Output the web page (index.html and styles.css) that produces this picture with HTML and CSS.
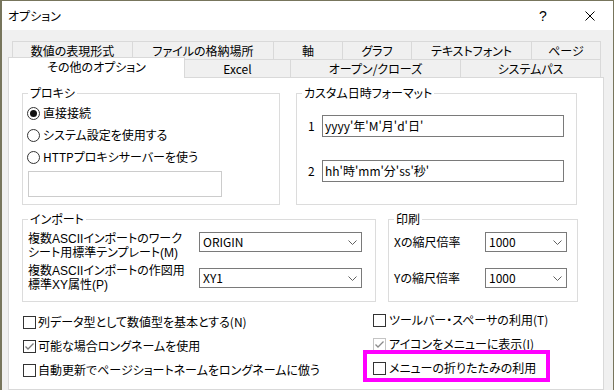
FILE: index.html
```html
<!DOCTYPE html>
<html lang="ja">
<head>
<meta charset="utf-8">
<link rel="stylesheet" href="styles.css">
</head>
<body>
<div class="dialog">
  <div class="titlebar">
    <span class="title">オプション</span>
    <span class="tb-btn help">?</span>
    <span class="tb-btn close"><svg width="10" height="10" viewBox="0 0 10 10"><path d="M0.5 0.5L9.5 9.5M9.5 0.5L0.5 9.5" stroke="#000" stroke-width="1" fill="none"/></svg></span>
  </div>
  <div class="content">
    <div class="tabrow back">
      <div class="tab">数値の表現形式</div>
      <div class="tab">ファイルの格納場所</div>
      <div class="tab">軸</div>
      <div class="tab">グラフ</div>
      <div class="tab">テキストフォント</div>
      <div class="tab">ページ</div>
    </div>
    <div class="tabrow front">
      <div class="tab sel">その他のオプション</div>
      <div class="tab nol">Excel</div>
      <div class="tab">オープン/クローズ</div>
      <div class="tab">システムパス</div>
    </div>
    <div class="panel">
      <div class="grouprow top">
        <fieldset class="proxy">
          <legend>プロキシ</legend>
          <div class="proxy-body">
            <div class="radio-row"><span class="radio on"></span>直接接続</div>
            <div class="radio-row"><span class="radio"></span>システム設定を使用する</div>
            <div class="radio-row"><span class="radio"></span>HTTPプロキシサーバーを使う</div>
            <div class="proxy-input"></div>
          </div>
        </fieldset>
        <fieldset class="datefmt">
          <legend>カスタム日時フォーマット</legend>
          <div class="date-body">
            <div class="date-row"><span class="date-label">1</span><div class="textbox">yyyy'年'M'月'd'日'</div></div>
            <div class="date-row"><span class="date-label">2</span><div class="textbox">hh'時'mm'分'ss'秒'</div></div>
          </div>
        </fieldset>
      </div>
      <div class="grouprow mid">
        <fieldset class="import">
          <legend>インポート</legend>
          <div class="import-body">
            <div class="imp-row r1">
              <div class="imp-label">複数ASCIIインポートのワーク<br>シート用標準テンプレート(M)</div>
              <div class="combo wide"><span>ORIGIN</span><svg width="9" height="5" viewBox="0 0 9 5"><path d="M0.5 0.5L4.5 4.5L8.5 0.5" stroke="#606060" fill="none"/></svg></div>
            </div>
            <div class="imp-row r2">
              <div class="imp-label">複数ASCIIインポートの作図用<br>標準XY属性(P)</div>
              <div class="combo wide"><span>XY1</span><svg width="9" height="5" viewBox="0 0 9 5"><path d="M0.5 0.5L4.5 4.5L8.5 0.5" stroke="#606060" fill="none"/></svg></div>
            </div>
          </div>
        </fieldset>
        <fieldset class="print">
          <legend>印刷</legend>
          <div class="print-body">
            <div class="pr-row">
              <div class="pr-label">Xの縮尺倍率</div>
              <div class="combo narrow"><span>1000</span><svg width="9" height="5" viewBox="0 0 9 5"><path d="M0.5 0.5L4.5 4.5L8.5 0.5" stroke="#606060" fill="none"/></svg></div>
            </div>
            <div class="pr-row">
              <div class="pr-label">Yの縮尺倍率</div>
              <div class="combo narrow"><span>1000</span><svg width="9" height="5" viewBox="0 0 9 5"><path d="M0.5 0.5L4.5 4.5L8.5 0.5" stroke="#606060" fill="none"/></svg></div>
            </div>
          </div>
        </fieldset>
      </div>
      <div class="checks">
        <div class="col-left">
          <div class="chk-row"><span class="chk"></span>列データ型として数値型を基本とする(N)</div>
          <div class="chk-row"><span class="chk"><svg width="11" height="11" viewBox="0 0 11 11"><path d="M1.5 5.5L4 8L9.5 2.5" stroke="#7a7a7a" stroke-width="1.3" fill="none"/></svg></span>可能な場合ロングネームを使用</div>
          <div class="chk-row"><span class="chk"></span>自動更新でページショートネームをロングネームに倣う</div>
        </div>
        <div class="col-right">
          <div class="chk-row"><span class="chk"></span>ツールバー・スペーサの利用(T)</div>
          <div class="chk-row"><span class="chk light"><svg width="11" height="11" viewBox="0 0 11 11"><path d="M1.5 5.5L4 8L9.5 2.5" stroke="#8a8a8a" stroke-width="1.3" fill="none"/></svg></span>アイコンをメニューに表示(I)</div>
          <div class="chk-row hl-row"><span class="chk"></span>メニューの折りたたみの利用<span class="highlight"></span></div>
        </div>
      </div>
    </div>
  </div>
</div>
</body>
</html>
```

FILE: styles.css
```css
* { box-sizing: border-box; }
html, body { margin: 0; height: 100%; }
body {
  background: #77755c;
  overflow: hidden;
  font-family: "Noto Sans CJK JP", "Noto Sans", sans-serif;
  font-size: 12px;
  line-height: 14px;
  color: #000;
  font-feature-settings: "palt";
}
.dialog {
  margin: 1px 0 0 2px;
  width: 611px;
  height: 389px;
  background: #f0f0f0;
  display: flex;
  flex-direction: column;
}
.titlebar {
  height: 29px;
  background: #fff;
  display: flex;
  align-items: center;
}
.title { padding-left: 6px; flex: 1; }
.tb-btn {
  width: 46px;
  height: 29px;
  display: flex;
  align-items: center;
  justify-content: center;
}
.help { font-size: 14px; font-family: "Liberation Sans", sans-serif; padding-right: 2px; }
.content {
  padding: 11px 0 0 6px;
  flex: 1;
  display: flex;
  flex-direction: column;
}
.tabrow { display: grid; height: 18px; }
.tabrow.back {
  margin-left: 4px;
  grid-template-columns: 120px 141px 69px 69px 120px 70px;
}
.tabrow.front { grid-template-columns: 177px 105px 170px 141px; }
.tab {
  border: 1px solid #d9d9d9;
  border-bottom: none;
  border-right: none;
  background: #f0f0f0;
  text-align: center;
  line-height: 17px;
  white-space: nowrap;
}
.tab:last-child { border-right: 1px solid #d9d9d9; }
.tab.nol { border-left: none; }
.tab.sel {
  background: #fff;
  margin-top: -2px;
  height: 21px;
  border-right: 1px solid #d9d9d9;
  position: relative;
  z-index: 1;
  line-height: 17px;
}
.panel {
  width: 596px;
  flex: 1;
  background: #fff;
  border: 1px solid #d9d9d9;
  padding: 8px 0 0 13px;
}
fieldset {
  margin: 0;
  padding: 0;
  border: 1px solid #dcdcdc;
  min-width: 0;
}
legend {
  margin-left: 5px;
  padding: 0 2px;
  line-height: 14px;
}
.grouprow { display: flex; }
.grouprow.top { gap: 16px; }
.grouprow.mid { gap: 12px; margin-top: 7px; }
.proxy { width: 258px; height: 119px; }
.datefmt { width: 281px; height: 119px; }
.proxy-body { padding: 2px 0 0 4px; }
.radio-row { height: 22px; display: flex; align-items: center; white-space: nowrap; }
.radio {
  width: 13px;
  height: 13px;
  border: 1px solid #333;
  border-radius: 50%;
  background: #fff;
  margin-right: 3px;
  display: flex;
  align-items: center;
  justify-content: center;
}
.radio.on::after {
  content: "";
  width: 7px;
  height: 7px;
  border-radius: 50%;
  background: #111;
}
.proxy-input {
  margin: 3px 0 0 1px;
  width: 194px;
  height: 26px;
  border: 1px solid #cccccc;
  background: #fff;
}
.date-body { padding: 15px 0 0 11px; }
.date-row { display: flex; align-items: center; }
.date-row + .date-row { margin-top: 23px; }
.date-label { width: 14px; }
.textbox {
  width: 242px;
  height: 22px;
  border: 1px solid #7a7a7a;
  padding-left: 2px;
  line-height: 20px;
  white-space: nowrap;
}
.import { width: 354px; height: 90px; }
.print { width: 190px; height: 90px; }
.import-body { padding: 6px 0 0 5px; }
.imp-row { display: flex; height: 36px; }
.imp-label {
  width: 171px;
  font-family: "Liberation Sans", "Noto Sans CJK JP", sans-serif;
  line-height: 14px;
  white-space: nowrap;
}
.imp-row.r1 .imp-label { padding-top: 0; }
.imp-row.r2 .imp-label { margin-top: -4px; }
.combo {
  height: 20px;
  border: 1px solid #7a7a7a;
  background: #fff;
  display: flex;
  align-items: center;
  justify-content: space-between;
  padding: 0 4px 0 3px;
  line-height: 18px;
}
.combo.wide { width: 163px; }
.combo.narrow { width: 82px; }
.print-body { padding: 6px 0 0 5px; }
.pr-row { display: flex; height: 36px; align-items: flex-start; }
.pr-label { width: 91px; line-height: 20px; }
.checks { display: flex; margin-top: 8px; }
.col-left { width: 351px; padding-left: 1px; }
.col-right { margin-top: -2px; }
.chk-row { height: 24px; display: flex; align-items: center; white-space: nowrap; }
.chk {
  width: 13px;
  height: 13px;
  border: 1px solid #333;
  background: #fff;
  margin-right: 2px;
  display: flex;
  align-items: center;
  justify-content: center;
}
.col-right .chk { margin-right: 3px; }
.chk.light { border-color: #c4c4c4; }
.hl-row { position: relative; }
.highlight {
  position: absolute;
  left: -10px;
  top: -6px;
  width: 187px;
  height: 32px;
  border: 4px solid #ff00ff;
}
```
